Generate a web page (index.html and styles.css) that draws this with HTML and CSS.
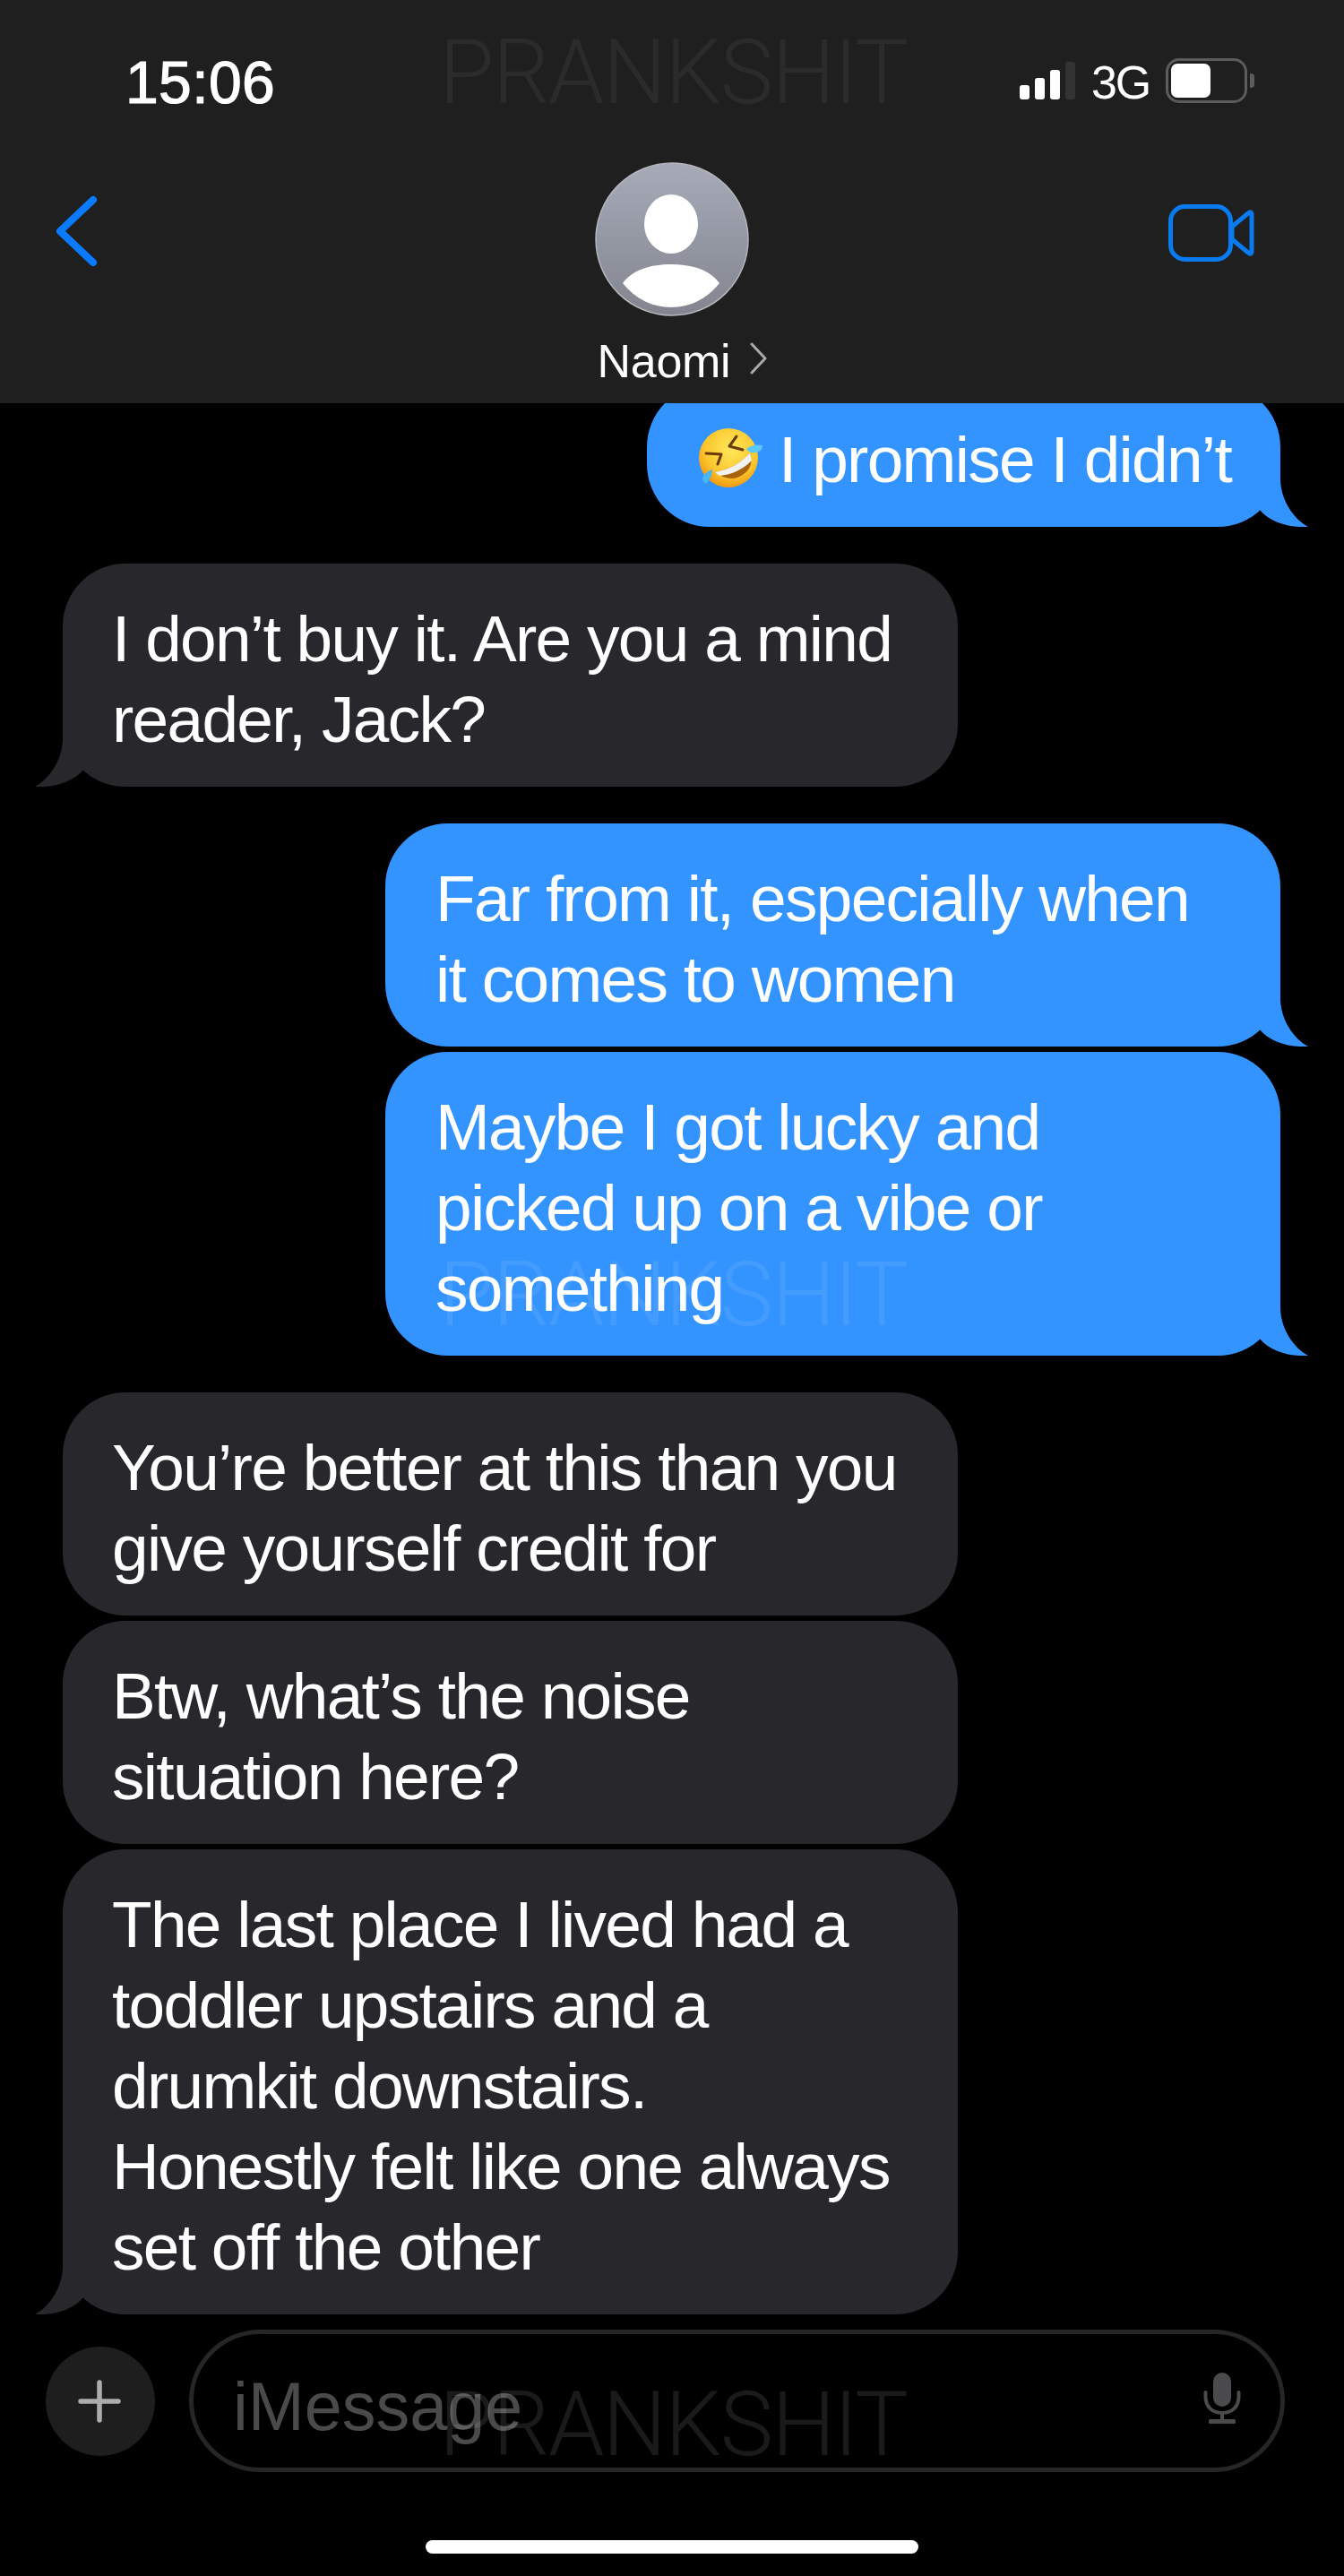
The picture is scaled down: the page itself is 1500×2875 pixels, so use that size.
FILE: index.html
```html
<!DOCTYPE html>
<html lang="en">
<head>
<meta charset="utf-8">
<title>Naomi</title>
<link rel="stylesheet" href="styles.css">
</head>
<body>
<div class="screen">
  <header class="header">
    <div class="status">
      <span class="time">15:06</span>
      <div class="status-right">
        <div class="signal">
          <i class="bar b1"></i><i class="bar b2"></i><i class="bar b3"></i><i class="bar b4"></i>
        </div>
        <span class="net">3G</span>
        <div class="battery"><div class="battery-fill"></div></div>
        <div class="battery-nub"></div>
      </div>
    </div>
    <div class="nav">
      <svg class="back" width="56" height="86" viewBox="0 0 56 86"><path d="M45 8 L8 43 L45 78" fill="none" stroke="#0a7aff" stroke-width="8" stroke-linecap="round" stroke-linejoin="round"/></svg>
      <div class="contact">
        <svg class="avatar" width="172" height="172" viewBox="0 0 172 172">
          <defs><linearGradient id="av" x1="0" y1="0" x2="0" y2="1"><stop offset="0" stop-color="#a7abb8"/><stop offset="1" stop-color="#82858f"/></linearGradient></defs>
          <circle cx="86" cy="86" r="85" fill="url(#av)" stroke="#b4b6bc" stroke-width="1.5"/>
          <ellipse cx="85" cy="69" rx="30" ry="33" fill="#fff"/>
          <path d="M31 135 C42 120 62 114 85 114 C108 114 128 120 139 135 C125 153 105 162 85 162 C65 162 45 153 31 135 Z" fill="#fff"/>
        </svg>
        <div class="name-row">
          <span class="name">Naomi</span>
          <svg class="chev" width="20" height="36" viewBox="0 0 20 36"><path d="M2 2 L17 18 L2 34" fill="none" stroke="#a9a9a9" stroke-width="3" stroke-linecap="round" stroke-linejoin="round"/></svg>
        </div>
      </div>
      <svg class="video" width="96" height="64" viewBox="0 0 96 64">
        <rect x="2.5" y="2.5" width="67" height="59" rx="16" fill="none" stroke="#0a7aef" stroke-width="5"/>
        <path d="M71 25 L89 10 Q93 7 93 12 V52 Q93 57 89 54 L71 39 Z" fill="none" stroke="#0a7aef" stroke-width="5" stroke-linejoin="round"/>
      </svg>
    </div>
  </header>

  <main class="chat">
    <div class="bubble out first fit">
      <svg class="emoji" width="68" height="68" viewBox="0 0 68 68">
        <defs><radialGradient id="em" cx="0.55" cy="0.35" r="0.7"><stop offset="0" stop-color="#ffe85a"/><stop offset="0.65" stop-color="#fbc52d"/><stop offset="1" stop-color="#f08e0c"/></radialGradient></defs>
        <circle cx="33" cy="34" r="33" fill="url(#em)"/>
        <path d="M42 10 L34 21 L49 25" fill="none" stroke="#6b3a06" stroke-width="3" stroke-linejoin="round" stroke-linecap="round"/>
        <path d="M8 29 L25 30 L21 41" fill="none" stroke="#6b3a06" stroke-width="3" stroke-linejoin="round" stroke-linecap="round"/>
        <path d="M18 50 Q42 46 57 28 Q62 44 50 52 Q36 63 18 50 Z" fill="#a9620a"/>
        <path d="M18 50 Q42 46 57 28 L59 37 Q44 52 23 54 Z" fill="#f2f2f2"/>
        <path d="M53 24 Q60 18 71 20 Q71 27 63 28 Q56 29 53 24 Z" fill="#5ac8fa"/>
        <path d="M15 47 Q15 56 8 63 Q2 60 5 54 Q8 49 15 47 Z" fill="#4bb6ec"/>
      </svg>
      <span class="emoji-text">I promise I didn’t</span>
      <svg class="tail" width="120" height="90" viewBox="0 0 120 90"><path d="M89 0 L89 38 C90 62 105 82 120 90 C100 91 78 86 65 70 L40 40 Z" fill="#3393ff"/></svg>
    </div>

    <div class="bubble in gap">I don’t buy it. Are you a mind<br>reader, Jack?
      <svg class="tail" width="120" height="90" viewBox="0 0 120 90"><path d="M89 0 L89 38 C90 62 105 82 120 90 C100 91 78 86 65 70 L40 40 Z" fill="#27272c"/></svg>
    </div>

    <div class="bubble out gap">Far from it, especially when<br>it comes to women
      <svg class="tail" width="120" height="90" viewBox="0 0 120 90"><path d="M89 0 L89 38 C90 62 105 82 120 90 C100 91 78 86 65 70 L40 40 Z" fill="#3393ff"/></svg>
    </div>

    <div class="bubble out tight">Maybe I got lucky and<br>picked up on a vibe or<br>something
      <svg class="tail" width="120" height="90" viewBox="0 0 120 90"><path d="M89 0 L89 38 C90 62 105 82 120 90 C100 91 78 86 65 70 L40 40 Z" fill="#3393ff"/></svg>
    </div>

    <div class="bubble in gap">You’re better at this than you<br>give yourself credit for</div>
    <div class="bubble in tight">Btw, what’s the noise<br>situation here?</div>
    <div class="bubble in tight">The last place I lived had a<br>toddler upstairs and a<br>drumkit downstairs.<br>Honestly felt like one always<br>set off the other
      <svg class="tail" width="120" height="90" viewBox="0 0 120 90"><path d="M89 0 L89 38 C90 62 105 82 120 90 C100 91 78 86 65 70 L40 40 Z" fill="#27272c"/></svg>
    </div>
  </main>

  <footer class="footer">
    <div class="composer">
      <div class="plus">
        <svg class="plus-icon" width="50" height="50" viewBox="0 0 50 50"><path d="M25 4 V46 M4 25 H46" stroke="#adadb0" stroke-width="5.5" stroke-linecap="round"/></svg>
      </div>
      <div class="field">
        <span class="placeholder">iMessage</span>
        <svg class="mic" width="42" height="58" viewBox="0 0 42 58">
          <rect x="11" y="0" width="20" height="38" rx="10" fill="#4b4b4d"/>
          <path d="M2.5 22 V27 C2.5 38 10 45 21 45 C32 45 39.5 38 39.5 27 V22" fill="none" stroke="#4b4b4d" stroke-width="4" stroke-linecap="round"/>
          <path d="M21 45 V54" stroke="#4b4b4d" stroke-width="4"/>
          <rect x="6" y="52" width="30" height="5" rx="1.5" fill="#4b4b4d"/>
        </svg>
      </div>
    </div>
    <div class="home"></div>
  </footer>

  <div class="mark mark-top">PRANKSHIT</div>
  <div class="mark mark-mid">PRANKSHIT</div>
  <div class="mark mark-bottom">PRANKSHIT</div>
</div>
</body>
</html>
```

FILE: styles.css
```css
* { box-sizing: border-box; }
html, body { margin: 0; padding: 0; background: #000; }
body { font-family: "Liberation Sans", Arial, sans-serif; color: #fff; }

.screen {
  position: relative;
  width: 1500px;
  height: 2875px;
  display: flex;
  flex-direction: column;
  overflow: hidden;
  background: #000;
}

/* Header */
.header {
  flex: none;
  height: 450px;
  background: #1f1f1f;
  position: relative;
  z-index: 2;
}
.status {
  height: 181px;
  display: flex;
  align-items: flex-start;
  justify-content: space-between;
  padding: 0 100px 0 140px;
}
.time {
  font-size: 66px;
  line-height: 66px;
  margin-top: 59px;
  letter-spacing: 0.4px;
  -webkit-text-stroke: 1.2px #fff;
}
.status-right {
  display: flex;
  align-items: flex-end;
  margin-top: 65px;
  height: 50px;
}
.signal { display: flex; align-items: flex-end; gap: 6px; height: 42px; margin-bottom: 4px; }
.bar { display: block; width: 11px; border-radius: 3px; background: #fff; }
.b1 { height: 16px; }
.b2 { height: 24px; }
.b3 { height: 33px; }
.b4 { height: 42px; background: #333; }
.net {
  font-size: 52px;
  line-height: 46px;
  letter-spacing: -2.2px;
  margin-left: 18px;
  margin-right: 18px;
}
.battery {
  width: 91px;
  height: 50px;
  border: 3px solid #5c5c5c;
  border-radius: 15px;
  padding: 3px;
}
.battery-fill { width: 44px; height: 100%; background: #fff; border-radius: 7px; }
.battery-nub {
  width: 5px;
  height: 16px;
  background: #5c5c5c;
  border-radius: 0 4px 4px 0;
  margin: 0 0 17px 3px;
}
.nav {
  display: grid;
  grid-template-columns: 1fr auto 1fr;
  padding: 0 59px;
  align-items: start;
}
.back { margin-top: 34px; }
.video { justify-self: end; margin: 47px 41px 0 0; }
.contact { display: flex; flex-direction: column; align-items: center; }
.avatar { display: block; }
.name-row {
  display: flex;
  align-items: flex-start;
  margin-top: 20px;
  margin-left: 24px;
  gap: 22px;
}
.name { font-size: 52px; line-height: 60px; letter-spacing: -0.3px; }
.chev { margin-top: 9px; }

/* Chat */
.chat {
  flex: none;
  height: 2150px;
  overflow: hidden;
  display: flex;
  flex-direction: column;
  padding: 0 71px 0 70px;
}
.bubble {
  position: relative;
  flex: none;
  width: 999px;
  padding: 39px 20px 30px 55px;
  border-radius: 70px;
  font-size: 73px;
  line-height: 90px;
  letter-spacing: -1.7px;
  white-space: nowrap;
}
.out { background: #3393ff; align-self: flex-end; padding-left: 56px; }
.in { background: #27272c; align-self: flex-start; }
.first { margin-top: -21px; }
.fit {
  width: 707px;
  display: flex;
  align-items: center;
  gap: 21px;
}
.gap { margin-top: 41px; }
.tight { margin-top: 6px; }
.emoji { flex: none; display: block; overflow: visible; margin: -5px 0 0 2px; }
.tail { position: absolute; bottom: 0; display: block; }
.out .tail { right: -31px; }
.in .tail { left: -31px; transform: scaleX(-1); }

/* Footer */
.footer { flex: none; height: 275px; }
.composer {
  display: flex;
  align-items: center;
  gap: 38px;
  padding: 0 66px 0 51px;
  height: 159px;
}
.plus {
  flex: none;
  width: 122px;
  height: 122px;
  border-radius: 50%;
  background: #1f1e1f;
  display: flex;
  align-items: center;
  justify-content: center;
}
.plus-icon { margin-right: 3px; }
.field {
  flex: 1;
  height: 159px;
  border: 5px solid #262626;
  border-radius: 80px;
  display: flex;
  align-items: center;
  justify-content: space-between;
  padding: 0 44px 0 44px;
}
.placeholder { font-size: 75.5px; line-height: 90px; color: #4a4a4c; margin-top: 12px; }
.mic { display: block; margin-top: -6px; }
.home {
  width: 550px;
  height: 15px;
  margin: 76px auto 0;
  border-radius: 8px;
  background: #fff;
}

/* Watermarks lying over the page */
.mark {
  position: absolute;
  left: 490px;
  font-family: Roboto, "Liberation Sans", sans-serif;
  font-weight: 300;
  font-size: 100px;
  line-height: 100px;
  letter-spacing: -1.6px;
  white-space: nowrap;
  pointer-events: none;
  z-index: 3;
}
.mark-top { top: 31px; color: rgba(255,255,255,.055); }
.mark-mid { top: 1395px; color: rgba(255,255,255,.085); }
.mark-bottom { top: 2656px; color: rgba(255,255,255,.1); }
```
